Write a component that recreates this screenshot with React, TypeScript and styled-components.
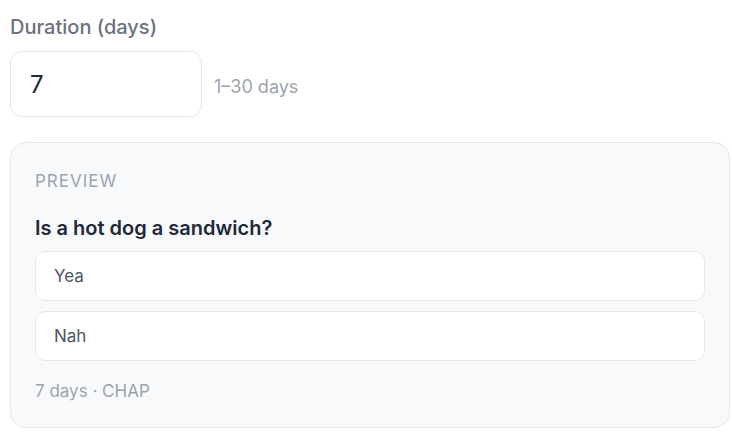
import styled, { createGlobalStyle } from "styled-components"

const GlobalStyle = createGlobalStyle`
  body {
    margin: 0;
    background: #ffffff;
    font-family: "Inter", "Noto Sans", sans-serif;
  }
`

const Page = styled.div`
  padding: 15px 10px 0 10px;
  width: 720px;
`

const Label = styled.label`
  display: block;
  font-size: 20px;
  line-height: 24px;
  font-weight: 500;
  color: #6b7280;
`

const FieldRow = styled.div`
  display: flex;
  align-items: center;
  gap: 12px;
  margin-top: 12px;
`

const NumberInput = styled.input`
  box-sizing: border-box;
  width: 192px;
  height: 66px;
  padding: 0 19px;
  border: 1px solid #e5e7eb;
  border-radius: 12px;
  background: #ffffff;
  font-family: inherit;
  font-size: 24px;
  color: #1f2937;
  outline: none;
`

const Hint = styled.span`
  margin-top: 4px;
  font-size: 18px;
  color: #9ca3af;
`

const PreviewCard = styled.section`
  box-sizing: border-box;
  margin-top: 25px;
  padding: 28px 24px 25px 24px;
  border: 1px solid #e5e7eb;
  border-radius: 16px;
  background: #f8f9fb;
`

const Eyebrow = styled.div`
  font-size: 17px;
  line-height: 20px;
  letter-spacing: 1px;
  color: #9ca3af;
`

const Question = styled.h3`
  margin: 25px 0 0 0;
  font-size: 20px;
  line-height: 24px;
  font-weight: 600;
  color: #1f2937;
`

const Options = styled.div`
  display: flex;
  flex-direction: column;
  gap: 10px;
  margin-top: 11px;
`

const Option = styled.div`
  box-sizing: border-box;
  height: 50px;
  display: flex;
  align-items: center;
  padding: 0 18px;
  border: 1px solid #e5e7eb;
  border-radius: 10px;
  background: #ffffff;
  font-size: 17px;
  color: #4b5563;
`

const Meta = styled.div`
  margin-top: 19px;
  font-size: 17px;
  line-height: 22px;
  color: #9ca3af;
`

const options = ["Yea", "Nah"]

const App = () => {
    const days = 7

    return (
        <Page>
            <GlobalStyle />
            <Label htmlFor="duration">Duration (days)</Label>
            <FieldRow>
                <NumberInput id="duration" defaultValue={days} />
                <Hint>1–30 days</Hint>
            </FieldRow>

            <PreviewCard>
                <Eyebrow>PREVIEW</Eyebrow>
                <Question>Is a hot dog a sandwich?</Question>
                <Options>
                    {options.map((item) => (
                        <Option key={item}>{item}</Option>
                    ))}
                </Options>
                <Meta>{days} days · CHAP</Meta>
            </PreviewCard>
        </Page>
    )
}

export default App
